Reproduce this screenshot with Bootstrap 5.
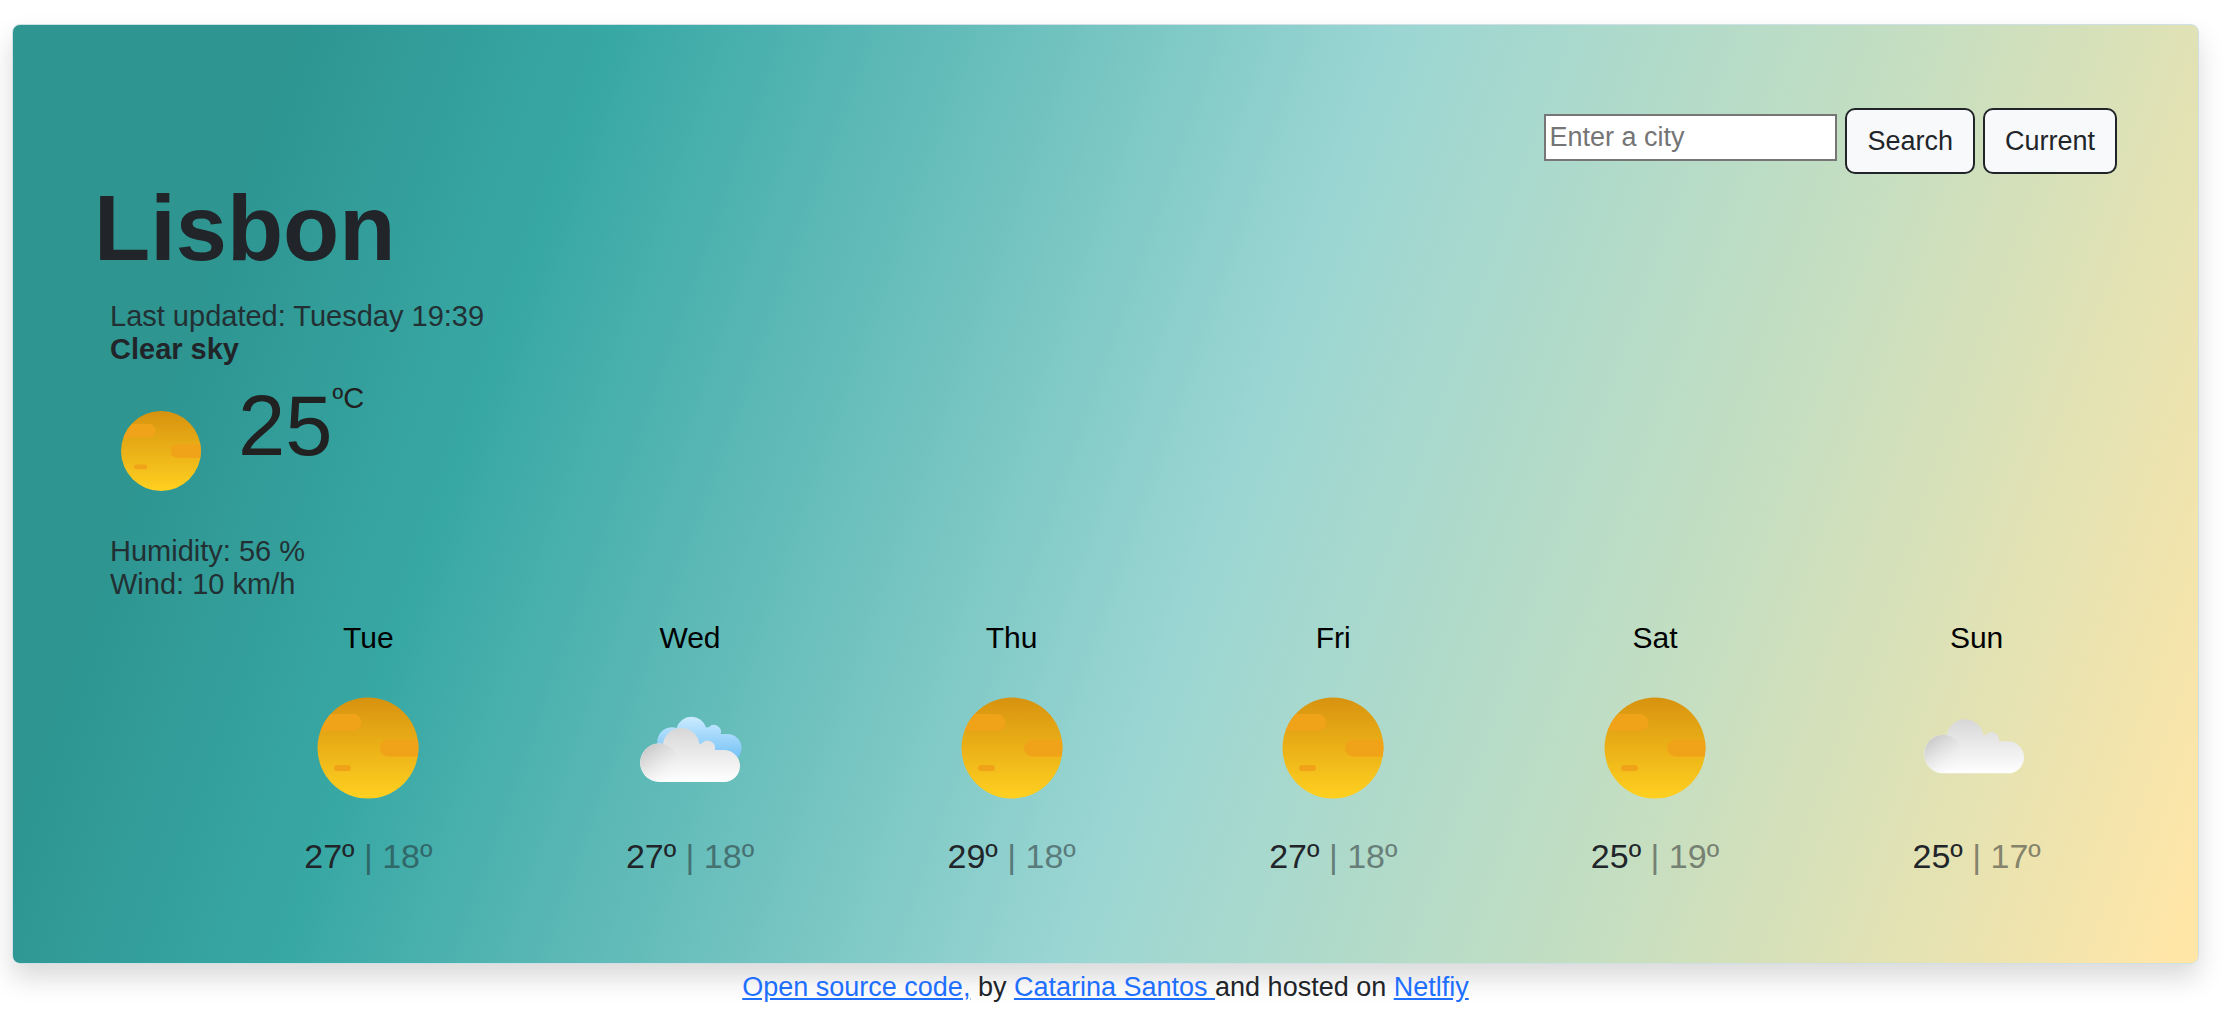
<!DOCTYPE html>
<html lang="en">
<head>
<meta charset="utf-8">
<meta name="viewport" content="width=device-width, initial-scale=1">
<title>Weather</title>
<link href="https://cdn.jsdelivr.net/npm/bootstrap@5.3.0/dist/css/bootstrap.min.css" rel="stylesheet">
<style>
body{font-family:"Liberation Sans",Arial,sans-serif;font-size:27px;line-height:40px;color:#212529;background:#fff}
.weather-page{padding:24px 41px 0 12px}
.weather-card{border:1px solid #cfe0e4;border-radius:8px;padding:83px 81px 83px 81px;box-shadow:0 14px 27px rgba(0,0,0,.15);
background:linear-gradient(109.6deg,#2e9591 11.2%,#38a8a5 24%,#9bd6d3 55%,#c3dec2 75%,#ffe6a7 99%)}
.search-form{gap:8px}
.city-input{width:293px;height:47px;padding:2px 3px;margin-bottom:8px;border:2px solid #767676;background:#fff;font-size:27px;line-height:36px;outline:0}
.city-input::placeholder{color:#757575}
.search-form .btn{font-size:27px;line-height:40px;padding:11px 20px;border:2px solid #212529;border-radius:10px;background:#f8f9fa;color:#212529}
.city-name{font-size:92px;line-height:108px;font-weight:700;margin:0 0 18px}
.detail-list{font-size:29px;line-height:33px;padding-left:16px;margin:0}
.soft-text{opacity:.9}
.now-row{padding:28px 0 27px 10px;gap:20px;color:#212121}
.now-icon{width:114px;height:114px}
.now-temp{font-size:85px;line-height:64px}
.now-unit{font-size:29px;line-height:8px}
.forecast{padding-left:134px;padding-top:19px;margin-bottom:3px}
.forecast .row{--bs-gutter-x:41px}
.day-name{font-size:30px;line-height:36px;color:#000;margin-bottom:20px}
.day-icon{width:144px;height:144px;margin-bottom:16px}
.day-temps{font-size:34px;line-height:41px}
.temp-min{opacity:.5}
.credits{padding-top:3px}
.credits a{color:#1f6fff}
</style>
<script src="https://cdn.jsdelivr.net/npm/bootstrap@5.3.0/dist/js/bootstrap.bundle.min.js"></script>
</head>
<body>
<svg class="position-absolute" width="0" height="0" aria-hidden="true">
<defs>
<linearGradient id="sunFill" x1="0" y1="0" x2="0" y2="1"><stop offset="0" stop-color="#d7920f"/><stop offset="1" stop-color="#ffd020"/></linearGradient>
<linearGradient id="cloudFill" gradientUnits="userSpaceOnUse" x1="0" y1="112" x2="0" y2="270"><stop offset="0" stop-color="#d8d8d8"/><stop offset="1" stop-color="#fff"/></linearGradient>
<linearGradient id="puffFill" gradientUnits="userSpaceOnUse" x1="85" y1="165" x2="152" y2="252"><stop offset="0" stop-color="#cbcbcb"/><stop offset="1" stop-color="#f8f8f8" stop-opacity=".3"/></linearGradient>
<linearGradient id="blueFill" gradientUnits="userSpaceOnUse" x1="0" y1="72" x2="0" y2="206"><stop offset="0" stop-color="#cdecff"/><stop offset="1" stop-color="#6fbff6"/></linearGradient>
<clipPath id="sunClip"><circle cx="72" cy="72" r="50.5"/></clipPath>
<symbol id="sun" viewBox="0 0 144 144">
<circle cx="72" cy="72" r="50.5" fill="url(#sunFill)"/>
<g clip-path="url(#sunClip)" fill="#f0a219"><rect x="10" y="38" width="55.5" height="17" rx="8.500"/><rect x="84" y="63.500" width="60" height="17" rx="8.500"/><rect x="38" y="89" width="17" height="6" rx="3"/></g>
</symbol>
<g id="cloudShape">
<path fill="url(#cloudFill)" d="M118 270A58 58 0 1 1 129 155A55 55 0 0 1 238 156Q242 156 246 154A22 22 0 0 1 284 174H312A48 48 0 0 1 312 270Z"/>
<circle cx="118" cy="212" r="57" fill="url(#puffFill)"/>
</g>
<symbol id="clouds" viewBox="-6 -48 432 432">
<path fill="url(#blueFill)" d="M112 155A44 44 0 0 1 170 108A46 46 0 0 1 258 106Q263 107 267 105A21 21 0 0 1 302 126H322A42 42 0 0 1 352 198L330 220L130 210Z"/>
<use href="#cloudShape"/>
</symbol>
<symbol id="cloud" viewBox="3 -22 432 432"><use href="#cloudShape"/></symbol>
</defs>
</svg>
<div class="weather-page">
<main class="weather-card">
<form class="search-form d-flex justify-content-end align-items-center">
<input class="city-input" type="text" placeholder="Enter a city" aria-label="City">
<button class="btn" type="button">Search</button>
<button class="btn" type="button">Current</button>
</form>
<h1 class="city-name">Lisbon</h1>
<ul class="detail-list list-unstyled">
<li class="soft-text">Last updated: Tuesday 19:39</li>
<li class="fw-bold">Clear sky</li>
</ul>
<div class="now-row d-flex align-items-start">
<svg class="now-icon" role="img" aria-label="Clear sky"><use href="#sun"/></svg>
<div class="d-flex align-items-start"><span class="now-temp">25</span><span class="now-unit">ºC</span></div>
</div>
<ul class="detail-list list-unstyled soft-text">
<li>Humidity: 56 %</li>
<li>Wind: 10 km/h</li>
</ul>
<section class="forecast">
<div class="row text-center">
<div class="col-2"><div class="day-name">Tue</div><svg class="day-icon d-block mx-auto"><use href="#sun"/></svg><div class="day-temps">27º <span class="temp-min">| 18º</span></div></div>
<div class="col-2"><div class="day-name">Wed</div><svg class="day-icon d-block mx-auto"><use href="#clouds"/></svg><div class="day-temps">27º <span class="temp-min">| 18º</span></div></div>
<div class="col-2"><div class="day-name">Thu</div><svg class="day-icon d-block mx-auto"><use href="#sun"/></svg><div class="day-temps">29º <span class="temp-min">| 18º</span></div></div>
<div class="col-2"><div class="day-name">Fri</div><svg class="day-icon d-block mx-auto"><use href="#sun"/></svg><div class="day-temps">27º <span class="temp-min">| 18º</span></div></div>
<div class="col-2"><div class="day-name">Sat</div><svg class="day-icon d-block mx-auto"><use href="#sun"/></svg><div class="day-temps">25º <span class="temp-min">| 19º</span></div></div>
<div class="col-2"><div class="day-name">Sun</div><svg class="day-icon d-block mx-auto"><use href="#cloud"/></svg><div class="day-temps">25º <span class="temp-min">| 17º</span></div></div>
</div>
</section>
</main>
<footer class="credits text-center"><a href="#">Open source code,</a> by <a href="#">Catarina Santos </a>and hosted on <a href="#">Netlfiy</a></footer>
</div>
</body>
</html>
